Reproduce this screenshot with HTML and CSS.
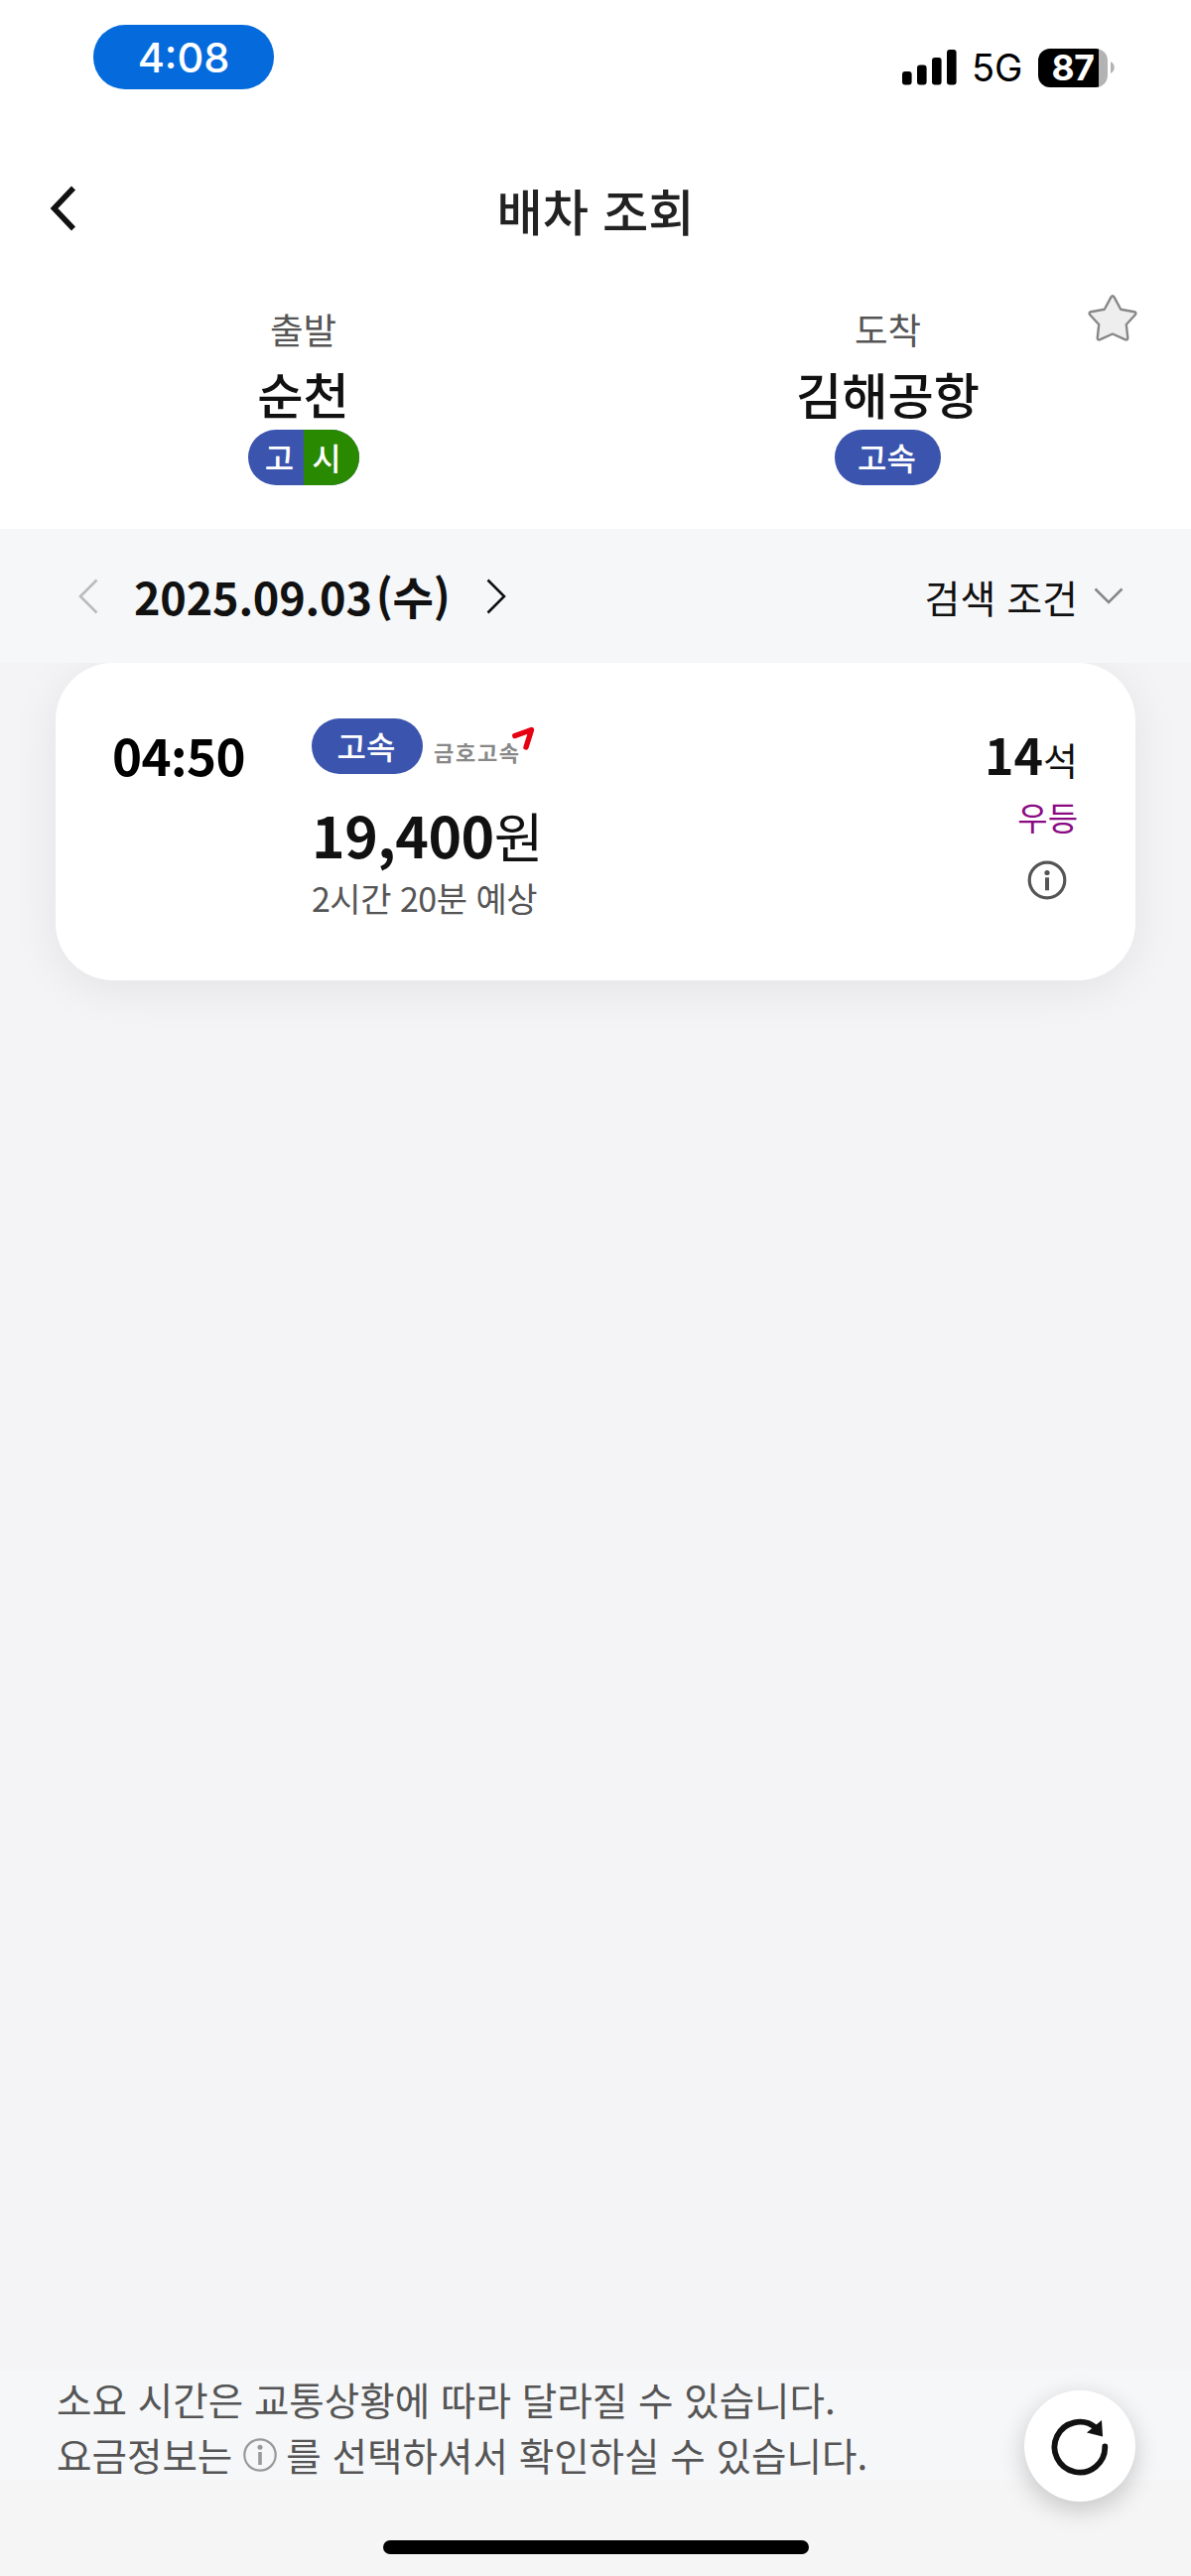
FILE: index.html
```html
<!DOCTYPE html>
<html lang="ko">
<head>
<meta charset="utf-8">
<title>배차 조회</title>
<link rel="stylesheet" href="styles.css">
</head>
<body>
<div class="screen">
  <div class="status">
    <div class="clock"><span>4:08</span></div>
    <div class="status-right">
      <svg class="signal" width="55" height="36" viewBox="0 0 55 36"><rect x="0" y="22" width="9.6" height="13.4" rx="3"/><rect x="15" y="15.400" width="9.6" height="20" rx="3"/><rect x="30" y="8" width="9.6" height="27.400" rx="3"/><rect x="45" y="0" width="9.6" height="35.400" rx="3"/></svg>
      <span class="network">5G</span>
      <div class="battery"><span>87</span></div>
      <svg class="nub" width="5" height="12" viewBox="0 0 5 12"><path d="M0 0C5 2.500 5 9.500 0 12Z" fill="#b3b3b3"/></svg>
    </div>
  </div>

  <header class="titlebar">
    <svg class="back" width="28" height="46" viewBox="0 0 28 46" fill="none" stroke="#111" stroke-width="5.600"><path d="M24 2.500 4.500 23 24 43.500"/></svg>
    <h1><span>배차 조회</span></h1>
  </header>

  <section class="route">
    <div class="stop">
      <span class="stop-label">출발</span>
      <strong class="stop-name">순천</strong>
      <div class="badge split"><span class="go">고</span><span class="si">시</span></div>
    </div>
    <div class="stop">
      <span class="stop-label">도착</span>
      <strong class="stop-name">김해공항</strong>
      <div class="badge arrive">고속</div>
    </div>
    <svg class="star" width="52" height="50" viewBox="0 0 52 50"><path d="M24.300 3.600Q26 1 27.700 3.600L34.200 15.800 47.800 18.200Q50.500 19.200 48.800 21.300L39.800 31 41.300 44.500Q41 47.200 38.500 46.200L26 40.500 13.500 46.200Q11 47.200 10.700 44.500L12.200 31 3.200 21.300Q1.500 19.200 4.200 18.200L17.800 15.800Z" fill="#eee" stroke="#888" stroke-width="2.400" stroke-linejoin="round"/></svg>
  </section>

  <section class="datebar">
    <svg width="20" height="36" viewBox="0 0 20 36" fill="none" stroke="#bbb" stroke-width="2.600"><path d="M18.500 1.500 2 18 18.500 34.500"/></svg>
    <span class="date"><b>2025.09.03</b><b class="weekday">(수)</b></span>
    <svg width="20" height="36" viewBox="0 0 20 36" fill="none" stroke="#111" stroke-width="2.600"><path d="M1.500 1.500 18 18 1.500 34.500"/></svg>
    <div class="filter"><span>검색 조건</span>
      <svg width="30" height="18" viewBox="0 0 30 18" fill="none" stroke="#888" stroke-width="2.600"><path d="M1.500 1.500 15 15 28.500 1.500"/></svg>
    </div>
  </section>

  <main class="list">
    <article class="card">
      <span class="time" lang="en">04:50</span>
      <div class="fare">
        <div class="carrier">
          <span class="badge">고속</span>
          <span class="company">금호고속</span>
          <svg class="mark" width="24" height="26" viewBox="0 0 24 26" fill="none" stroke="#e60012" stroke-width="5.400" stroke-linecap="round" stroke-linejoin="round"><path d="M3.800 9.500 20.500 3.500 15 21"/></svg>
        </div>
        <div class="price"><b>19,400</b><span>원</span></div>
        <div class="duration">2시간 20분 예상</div>
      </div>
      <div class="seats">
        <div class="count"><b>14</b><span>석</span></div>
        <div class="grade">우등</div>
        <svg class="info" width="40" height="40" viewBox="0 0 40 40"><circle cx="20" cy="20" r="17.800" fill="none" stroke="#555" stroke-width="3.200"/><circle cx="20" cy="12.500" r="2.600" fill="#555"/><rect x="18" y="17.300" width="4" height="13" fill="#555"/></svg>
      </div>
    </article>
  </main>

  <footer class="notice">
    <div class="notice-text">
      <p><span>소요 시간은 교통상황에 따라 달라질 수 있습니다.</span></p>
      <p><span>요금정보는</span><svg width="34" height="34" viewBox="0 0 34 34"><circle cx="17" cy="17" r="15.700" fill="none" stroke="#999" stroke-width="2.200"/><circle cx="17" cy="9.200" r="2.500" fill="#999"/><rect x="15.200" y="14" width="3.600" height="13" fill="#999"/></svg><span>를 선택하셔서 확인하실 수 있습니다.</span></p>
    </div>
    <button class="refresh" aria-label="새로고침"><svg width="60" height="60" viewBox="0 0 60 60"><path d="M55.300 30.500A25.400 25.400 0 1 1 46 11.500" fill="none" stroke="#111" stroke-width="5.800" stroke-linecap="round"/><path d="M52 4 53 20.500 37 16.500Z" fill="#111"/></svg></button>
  </footer>
  <div class="home"><i></i></div>
</div>
</body>
</html>
```
FILE: styles.css
```css
* { box-sizing: border-box; margin: 0; padding: 0; }
body { width: 1200px; background: #fff; color: #111; font-family: "Noto Sans CJK KR", "Noto Sans", sans-serif; }
svg { display: block; flex: none; }
.screen { display: flex; flex-direction: column; height: 2596px; overflow: hidden; white-space: nowrap; }

.status { display: flex; justify-content: space-between; align-items: flex-start; height: 140px; padding: 25px 76px 0 94px; font-family: Inter, "Liberation Sans", sans-serif; }
.clock { width: 182px; height: 65px; border-radius: 32px; background: #056bdc; color: #fff; font-size: 41.500px; font-weight: 500; line-height: 66px; text-align: center; }
.status-right { display: flex; align-items: center; padding-top: 24px; height: 62px; }
.signal { margin-right: -1px; }
.network { width: 83px; padding-left: 16px; font-size: 38px; line-height: 42px; color: #000; }
.battery { width: 70px; height: 39px; border-radius: 12px; background: linear-gradient(90deg, #000 61px, #b3b3b3 61px); color: #fff; font-size: 35.500px; font-weight: 700; line-height: 40px; text-align: center; letter-spacing: -.500px; }
.nub { margin-left: 3px; }

.titlebar { display: flex; align-items: center; height: 140px; padding-left: 50px; }
.titlebar h1 { flex: 1; margin-right: 78px; padding-top: 2px; text-align: center; font-size: 50.300px; font-weight: 500; line-height: 70px; color: #222; }

.route { position: relative; display: flex; height: 253px; padding: 26px 11px 0; }
.stop { flex: 1; display: flex; flex-direction: column; align-items: center; }
.stop-label { font-size: 36.500px; line-height: 52px; color: #555; }
.stop-name { margin-top: 5px; font-size: 50.300px; font-weight: 500; line-height: 66px; }
.badge { width: 112px; height: 56px; padding-right: 2px; border-radius: 28px; background: #3b54ad; color: #fff; font-size: 32px; font-weight: 500; line-height: 54px; text-align: center; }
.stop .badge { margin-top: 4px; }
.stop .arrive { width: 107px; }
.split { display: flex; overflow: hidden; padding-right: 0; }
.split span { flex: none; width: 56px; }
.go { padding-left: 8px; }
.si { padding-right: 9px; background: #298900; }
.star { position: absolute; left: 1095px; top: 16px; }

.datebar { display: flex; align-items: center; height: 135px; padding: 0 68px 0 79px; background: #f6f7f9; }
.date { width: 391px; padding-left: 36px; font-size: 45px; line-height: 68px; letter-spacing: -.200px; }
.weekday { margin-left: 4px; }
.filter { display: flex; align-items: center; gap: 16px; margin-left: auto; font-size: 39px; line-height: 56px; }

.list { flex: 1; overflow: hidden; padding: 0 56px; background: #f4f4f6; }
.card { display: flex; height: 320px; padding: 56px 58px 0 57px; border-radius: 58px; background: #fff; box-shadow: 0 8px 48px rgba(0, 0, 0, .075); }
.time { width: 201px; font-family: "Noto Sans CJK JP", "Noto Sans", sans-serif; font-size: 51px; font-weight: 700; line-height: 72px; color: #000; letter-spacing: -.600px; }
.carrier { display: flex; height: 56px; }
.company { margin-left: 11px; padding-top: 18px; font-size: 22px; line-height: 30px; font-weight: 700; color: #888; letter-spacing: 1.700px; }
.mark { margin: 8px 0 0 -9.500px; }
.price { display: flex; align-items: baseline; margin-top: 18px; font-size: 57px; line-height: 84px; }
.price b { letter-spacing: -.500px; }
.price span { font-size: 54px; }
.duration { margin-top: -4px; font-size: 34px; line-height: 50px; color: #555; letter-spacing: -.500px; }
.seats { display: flex; flex-direction: column; align-items: flex-end; margin-left: auto; }
.count { display: flex; align-items: baseline; margin-top: -1px; font-size: 50px; line-height: 72px; }
.count span { font-size: 38px; }
.grade { margin-top: -3px; font-size: 33px; line-height: 50px; color: #8b0a83; }
.info { margin: 19px 11px 0 0; }

.notice { display: flex; justify-content: space-between; height: 113px; padding: 0 56px 0 57px; background: #f6f7f9; }
.notice-text { font-size: 38.550px; line-height: 56px; color: #555; padding-top: 2px; }
.notice-text p { display: flex; align-items: center; }
.notice-text svg { margin: 2px 9px 0 11px; }
.refresh { display: grid; place-items: center; width: 112px; height: 112px; margin-top: 22px; border: 0; border-radius: 50%; background: #fff; box-shadow: 0 8px 26px rgba(0, 0, 0, .2); position: relative; z-index: 1; }
.home { display: flex; justify-content: center; height: 96px; padding-top: 60px; background: #f5f5f5; }
.home i { width: 429px; height: 14px; border-radius: 7px; background: #000; }
```
